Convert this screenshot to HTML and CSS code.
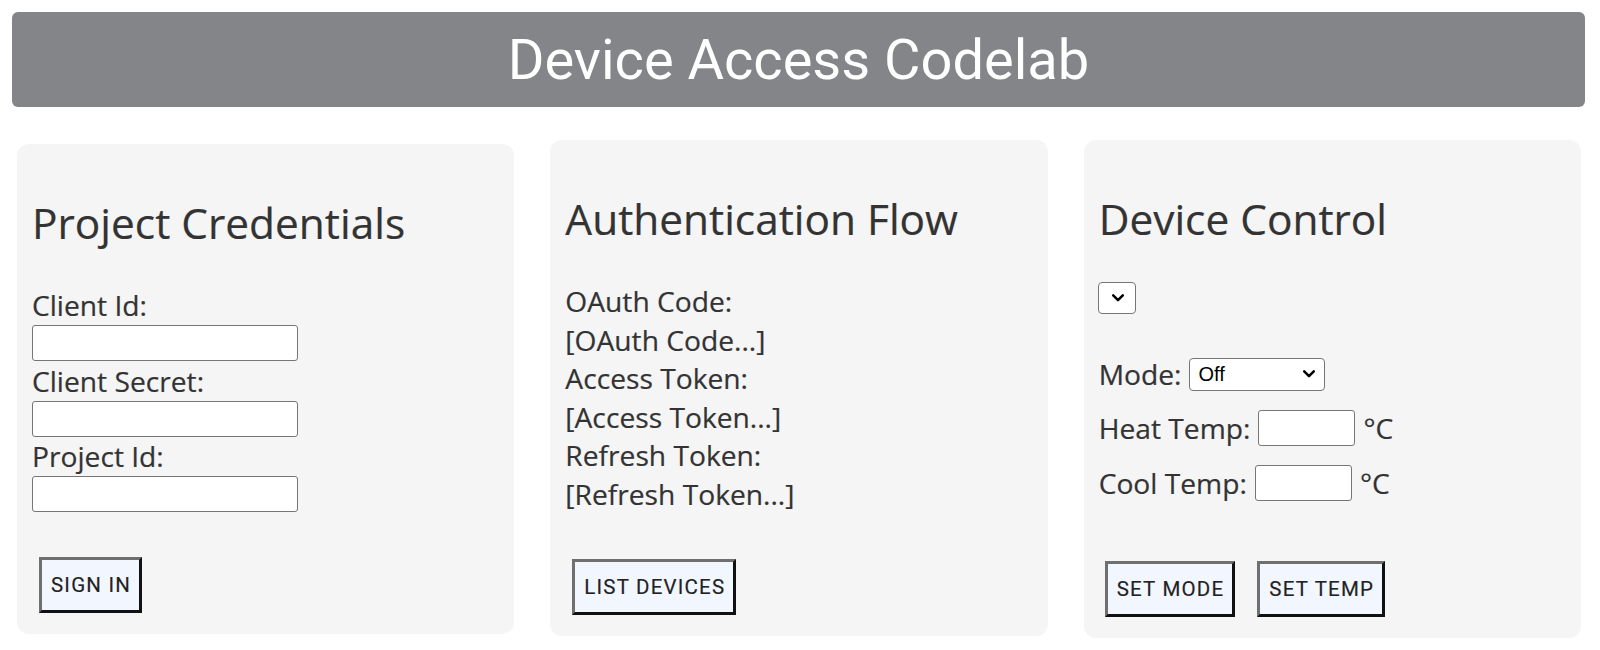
FILE: index.html
```html
<!DOCTYPE html>
<html lang="en">
<head>
<meta charset="utf-8">
<title>Device Access Codelab</title>
<link rel="stylesheet" href="styles.css">
</head>
<body>
<header class="topbar">
  <h1 class="title">Device Access Codelab</h1>
</header>
<main class="cards">
  <section class="card card-credentials">
    <h2 class="card-title">Project Credentials</h2>
    <label class="field-label" for="clientId">Client Id:</label>
    <input class="text-input" id="clientId" type="text">
    <label class="field-label" for="clientSecret">Client Secret:</label>
    <input class="text-input" id="clientSecret" type="text">
    <label class="field-label" for="projectId">Project Id:</label>
    <input class="text-input" id="projectId" type="text">
    <div class="actions actions-signin">
      <button class="btn" type="button">Sign In</button>
    </div>
  </section>
  <section class="card card-auth">
    <h2 class="card-title">Authentication Flow</h2>
    <div class="kv-list">
      <div class="kv-line">OAuth Code:</div>
      <div class="kv-line">[OAuth Code...]</div>
      <div class="kv-line">Access Token:</div>
      <div class="kv-line">[Access Token...]</div>
      <div class="kv-line">Refresh Token:</div>
      <div class="kv-line">[Refresh Token...]</div>
    </div>
    <div class="actions actions-list">
      <button class="btn" type="button">List Devices</button>
    </div>
  </section>
  <section class="card card-control">
    <h2 class="card-title">Device Control</h2>
    <div class="device-row">
      <span class="select-wrap">
        <select class="device-select" aria-label="Device"></select>
        <svg class="chev chev-device" viewBox="0 0 12 8" width="12" height="8" aria-hidden="true"><path d="M1.2 1.4 L6 6.2 L10.8 1.4" fill="none" stroke="#000" stroke-width="2.5" stroke-linecap="round" stroke-linejoin="round"/></svg>
      </span>
    </div>
    <div class="control-rows">
      <div class="control-row">
        <span>Mode:</span>
        <span class="select-wrap">
          <select class="mode-select" aria-label="Mode">
            <option>Off</option>
            <option>Heat</option>
            <option>Cool</option>
            <option>HeatCool</option>
          </select>
          <svg class="chev chev-mode" viewBox="0 0 12 8" width="12" height="8" aria-hidden="true"><path d="M1.2 1.4 L6 6.2 L10.8 1.4" fill="none" stroke="#000" stroke-width="2.5" stroke-linecap="round" stroke-linejoin="round"/></svg>
        </span>
      </div>
      <div class="control-row">
        <span>Heat Temp:</span>
        <input class="temp-input" type="text" aria-label="Heat Temp">
        <span>°C</span>
      </div>
      <div class="control-row control-row-cool">
        <span>Cool Temp:</span>
        <input class="temp-input" type="text" aria-label="Cool Temp">
        <span>°C</span>
      </div>
    </div>
    <div class="actions actions-control">
      <button class="btn" type="button">Set Mode</button>
      <button class="btn" type="button">Set Temp</button>
    </div>
  </section>
</main>
</body>
</html>
```
FILE: styles.css
```css
html, body {
  margin: 0;
  padding: 0;
  background: #ffffff;
}

body {
  font-family: "Open Sans", "Noto Sans", sans-serif;
  color: #333333;
  font-size: 28.2px;
  -webkit-text-stroke: 0.2px #333333;
}

.topbar {
  margin: 12px 15px 0 12px;
  height: 95px;
  background: #848589;
  border-radius: 6px;
  display: flex;
  align-items: center;
  justify-content: center;
}

.title {
  margin: 0;
  font-family: Roboto, "Liberation Sans", sans-serif;
  font-weight: 400;
  font-size: 56px;
  line-height: 66px;
  color: #ffffff;
  -webkit-text-stroke: 0;
}

.cards {
  display: flex;
  align-items: flex-start;
  gap: 36px;
  margin: 33px 19px 0 17px;
}

.card {
  flex: 1 1 0;
  min-width: 0;
  background: #f5f5f5;
  border-radius: 12px;
  padding: 15px 15px 21px 15px;
}

.card-credentials {
  margin-top: 4px;
}

.card-title {
  margin: 36px 0 35px 0;
  font-size: 42.4px;
  font-weight: 400;
  line-height: 56px;
  color: #333333;
  white-space: nowrap;
}

.field-label {
  display: block;
  line-height: 38px;
}

.text-input {
  display: block;
  box-sizing: border-box;
  width: 266px;
  height: 36px;
  margin: 1px 0 0.5px 0;
  border: 1px solid #767676;
  border-radius: 3px;
  background: #ffffff;
  font-size: 18px;
}

.kv-line {
  line-height: 38.5px;
  white-space: nowrap;
}

.actions {
  display: flex;
  gap: 22px;
  margin-left: 7px;
}

.actions-signin {
  margin-top: 45px;
}

.actions-list {
  margin-top: 46px;
}

.actions-control {
  margin-top: 59px;
  margin-left: 6px;
}

.btn {
  box-sizing: border-box;
  height: 56px;
  padding: 0 8px 0 9px;
  border-style: solid;
  border-width: 3px;
  border-color: #6f6f6f #111111 #111111 #6f6f6f;
  background: #f2f6ff;
  font-family: Roboto, "Liberation Sans", sans-serif;
  font-size: 20.5px;
  letter-spacing: 1.2px;
  text-transform: uppercase;
  color: #222222;
  -webkit-text-stroke: 0.15px #222222;
  cursor: pointer;
}

.device-row {
  display: flex;
  margin-top: 2px;
}

.select-wrap {
  position: relative;
  display: inline-flex;
}

.chev {
  position: absolute;
  top: 50%;
  margin-top: -4px;
  pointer-events: none;
}

.chev-device {
  left: 13px;
}

.chev-mode {
  right: 10px;
}

.device-select,
.mode-select {
  -webkit-appearance: none;
  appearance: none;
  box-sizing: border-box;
  border: 1px solid #767676;
  border-radius: 4px;
  background: #ffffff;
  margin: 0;
}

.device-select {
  width: 38px;
  height: 32px;
  margin-left: -1px;
}

.control-rows {
  display: flex;
  flex-direction: column;
  gap: 15.5px;
  margin-top: 41px;
}

.control-row {
  display: flex;
  align-items: center;
  gap: 8px;
  height: 38px;
  line-height: 38px;
  white-space: nowrap;
}

.control-row-cool {
  margin-top: 2px;
}

.mode-select {
  width: 136px;
  height: 33px;
  font-family: "Liberation Sans", Arial, sans-serif;
  font-size: 20px;
  color: #000000;
  -webkit-text-stroke: 0;
  padding: 0 0 0 8px;
}

.temp-input {
  box-sizing: border-box;
  width: 97px;
  height: 36px;
  border: 1px solid #767676;
  border-radius: 3px;
  background: #ffffff;
  font-size: 18px;
}
```
